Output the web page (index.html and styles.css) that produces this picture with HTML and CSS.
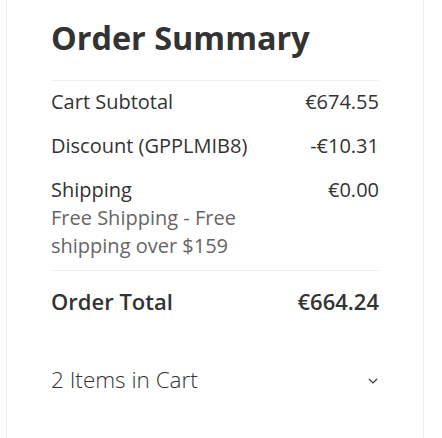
FILE: index.html
```html
<!DOCTYPE html>
<html>
<head>
<meta charset="utf-8">
<link rel="stylesheet" href="styles.css">
</head>
<body>
<div class="card">
  <h1 class="title">Order Summary</h1>
  <div class="totals">
    <div class="row">
      <span>Cart Subtotal</span>
      <span>€674.55</span>
    </div>
    <div class="row">
      <span>Discount (GPPLMIB8)</span>
      <span>-€10.31</span>
    </div>
    <div class="row">
      <div class="label">
        <div>Shipping</div>
        <div class="sub">Free Shipping - Free<br>shipping over $159</div>
      </div>
      <span>€0.00</span>
    </div>
  </div>
  <div class="grand">
    <span>Order Total</span>
    <span>€664.24</span>
  </div>
  <div class="items">
    <span>2 Items in Cart</span>
    <svg class="chev" width="10" height="6" viewBox="0 0 10 6"><path d="M1 1 L5 5 L9 1" fill="none" stroke="#333" stroke-width="1.2"/></svg>
  </div>
</div>
</body>
</html>
```

FILE: styles.css
```css
html, body {
  margin: 0;
  padding: 0;
  background: #fff;
}
body {
  font-family: "Open Sans", sans-serif;
  color: #333;
}
.card {
  margin-left: 6px;
  width: 418px;
  border: 1px solid #f0f0f0;
  border-top: none;
  padding: 18px 44px 60px 44px;
  box-sizing: border-box;
}
.title {
  margin: 0;
  font-size: 32.4px;
  font-weight: 700;
  line-height: 38px;
  padding-bottom: 24px;
  border-bottom: 1px solid #eef1f5;
}
.totals {
  padding: 7px 0 10px;
  display: flex;
  flex-direction: column;
  gap: 16px;
  border-bottom: 1px solid #eeeeee;
}
.row {
  display: flex;
  justify-content: space-between;
  align-items: flex-start;
  font-size: 20px;
  line-height: 28px;
}
.sub {
  color: #666;
}
.grand {
  display: flex;
  justify-content: space-between;
  font-size: 22px;
  font-weight: 600;
  line-height: 30px;
  padding: 15px 0 0 0;
}
.items {
  display: flex;
  justify-content: space-between;
  align-items: center;
  font-size: 22.5px;
  font-weight: 300;
  line-height: 30px;
  padding: 49px 0 0 0;
}
.chev {
  margin-right: 1px;
  margin-top: 2px;
}
```
